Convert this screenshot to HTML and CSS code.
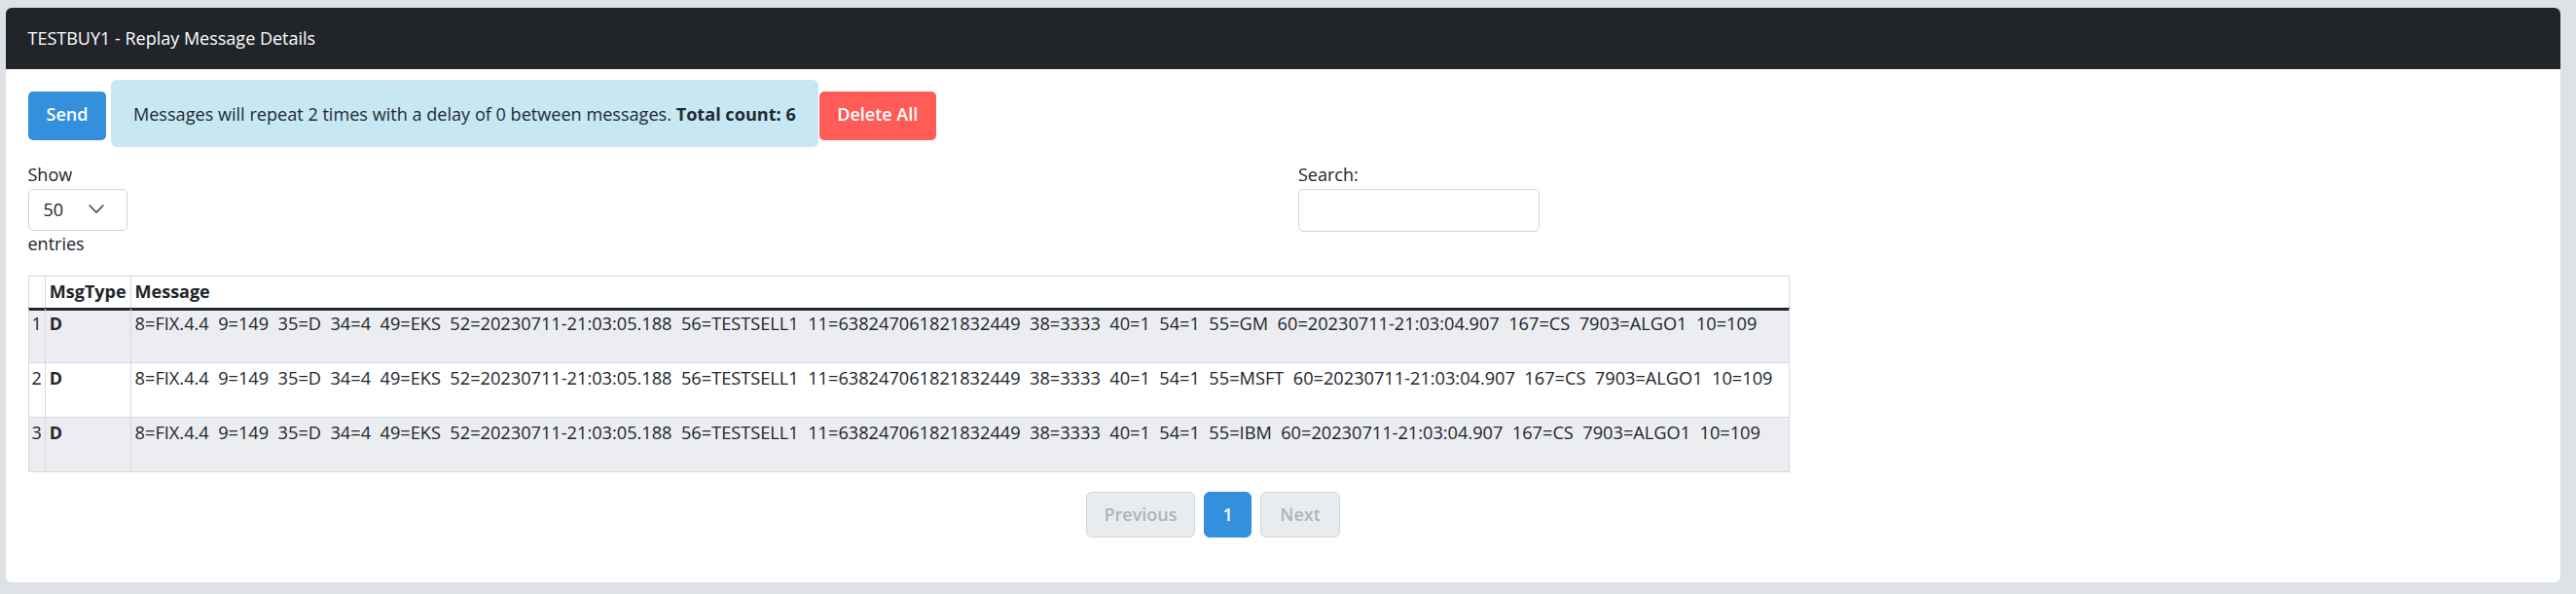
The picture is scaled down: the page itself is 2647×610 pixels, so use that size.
FILE: index.html
```html
<!DOCTYPE html>
<html lang="en">
<head>
<meta charset="utf-8">
<title>TESTBUY1 - Replay Message Details</title>
<link rel="stylesheet" href="styles.css">
</head>
<body>
<div class="card">
  <div class="card-header">TESTBUY1 - Replay Message Details</div>
  <div class="card-body">
    <div class="actions">
      <button class="btn btn-send">Send</button>
      <div class="alert">Messages will repeat 2 times with a delay of 0 between messages. <strong>Total count: 6</strong></div>
      <button class="btn btn-delete">Delete All</button>
    </div>

    <div class="filters">
      <div class="length">
        <div class="lbl">Show</div>
        <div class="select">
          <span>50</span>
          <svg class="chev" width="16" height="10" viewBox="0 0 16 10"><polyline points="1.2,1.2 8,8.2 14.8,1.2" fill="none" stroke="#555b61" stroke-width="1.8" stroke-linecap="round" stroke-linejoin="round"/></svg>
        </div>
        <div class="lbl">entries</div>
      </div>
      <div class="search">
        <div class="lbl">Search:</div>
        <input class="search-input" type="search" aria-label="Search">
      </div>
    </div>

    <table class="grid">
      <thead>
        <tr><th class="num"></th><th class="type">MsgType</th><th class="msg-h">Message</th></tr>
      </thead>
      <tbody>
        <tr class="odd"><td class="num">1</td><td class="type"><b>D</b></td><td class="msg">8=FIX.4.4  9=149  35=D  34=4  49=EKS  52=20230711-21:03:05.188  56=TESTSELL1  11=638247061821832449  38=3333  40=1  54=1  55=GM  60=20230711-21:03:04.907  167=CS  7903=ALGO1  10=109</td></tr>
        <tr><td class="num">2</td><td class="type"><b>D</b></td><td class="msg">8=FIX.4.4  9=149  35=D  34=4  49=EKS  52=20230711-21:03:05.188  56=TESTSELL1  11=638247061821832449  38=3333  40=1  54=1  55=MSFT  60=20230711-21:03:04.907  167=CS  7903=ALGO1  10=109</td></tr>
        <tr class="odd"><td class="num">3</td><td class="type"><b>D</b></td><td class="msg">8=FIX.4.4  9=149  35=D  34=4  49=EKS  52=20230711-21:03:05.188  56=TESTSELL1  11=638247061821832449  38=3333  40=1  54=1  55=IBM  60=20230711-21:03:04.907  167=CS  7903=ALGO1  10=109</td></tr>
      </tbody>
    </table>

    <div class="pager">
      <span class="page disabled prev">Previous</span>
      <span class="page active">1</span>
      <span class="page disabled">Next</span>
    </div>
  </div>
</div>
</body>
</html>
```

FILE: styles.css
```css
* { box-sizing: border-box; }

html, body { height: 100%; }

body {
  margin: 0;
  padding: 8px 16px 11.5px 6px;
  background: #dee2e6;
  font-family: "Open Sans", "Noto Sans", sans-serif;
  font-size: 18px;
  line-height: 27px;
  color: #212529;
}

.card {
  background: #fff;
  border-radius: 6px;
  overflow: hidden;
}

.card-header {
  background: #212529;
  color: #fff;
  padding: 18px 22.5px;
  line-height: 27px;
}

.card-body {
  padding: 11px 22.5px 46px;
}

.actions {
  display: flex;
  align-items: baseline;
}

.btn {
  font-family: inherit;
  font-size: 18px;
  font-weight: 600;
  line-height: 27px;
  color: #fff;
  border: 0;
  border-radius: 5px;
  height: 50px;
  padding: 10px 19px 13px;
  margin: 0;
}

.btn-send {
  background: #3490dc;
  margin-right: 5px;
}

.btn-delete {
  background: #ff5c58;
  margin-left: 1px;
  padding-left: 18.5px;
  padding-right: 18.5px;
}

.alert {
  background: #c7e8f3;
  color: #1c2b31;
  border-radius: 6px;
  padding: 21.5px 23px 20.5px 22.5px;
  line-height: 27px;
  font-size: 18.1px;
}

.alert strong { font-weight: 700; }

.filters {
  display: grid;
  grid-template-columns: 1fr 248px;
  width: 1553.5px;
  margin-top: 14.5px;
}

.lbl { line-height: 27px; }

.select {
  display: flex;
  align-items: center;
  justify-content: space-between;
  width: 102px;
  height: 43px;
  margin-top: 1px;
  padding: 0 23px 0 15px;
  border: 1px solid #ced4da;
  border-radius: 5px;
  background: #fff;
}

.chev { display: block; }

.search-input {
  display: block;
  width: 248px;
  height: 44px;
  margin: 1px 0 0;
  border: 1px solid #ced4da;
  border-radius: 5px;
  background: #fff;
  font-family: inherit;
  font-size: 18px;
}

.grid {
  margin-top: 19px;
  width: 1810px;
  border-collapse: collapse;
  border: 1px solid #d5d8dd;
}

.grid th, .grid td {
  border: 1px solid #d5d8dd;
  text-align: left;
  vertical-align: top;
  line-height: 27px;
}

.grid th {
  font-weight: 700;
  padding: 2px 4px 3px;
  border-bottom-color: #212529;
}

.grid td {
  padding: 2px 4px 26px;
}

.grid tbody tr:first-child td {
  box-shadow: inset 0 2px 0 #212529;
}

.grid tr.odd td { background: #ecedf1; }

.grid .num {
  width: 1px;
  white-space: nowrap;
  padding-left: 3px;
  padding-right: 3px;
}

.grid .type {
  width: 1px;
  white-space: nowrap;
}

.grid td.msg {
  white-space: pre;
  font-size: 18.2px;
}

.grid b { font-weight: 700; }

.pager {
  display: flex;
  gap: 9px;
  margin-top: 20px;
  margin-left: 1087.5px;
}

.page {
  display: block;
  height: 47px;
  padding: 9px 19px;
  border: 1px solid #d3d7dc;
  border-radius: 6px;
  font-weight: 600;
  line-height: 27px;
}

.page.prev {
  padding-left: 17.5px;
  padding-right: 17.5px;
}

.page.disabled {
  background: #e9ecef;
  color: #adb5bd;
}

.page.active {
  background: #3490dc;
  border-color: #3490dc;
  color: #fff;
  padding: 9px 18.5px;
}
```
